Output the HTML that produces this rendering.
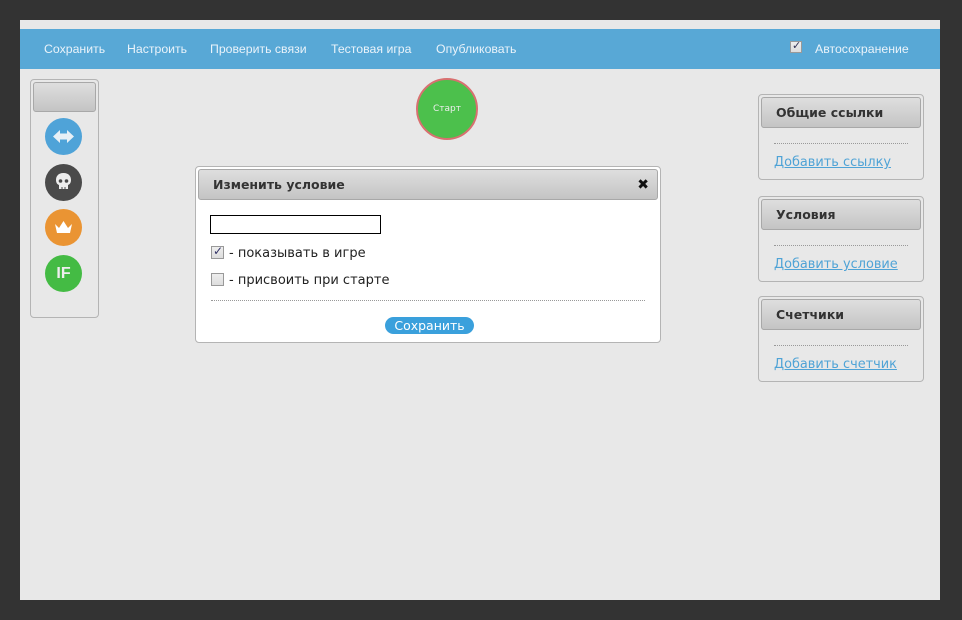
<!DOCTYPE html>
<html><head><meta charset="utf-8"><style>
*{box-sizing:border-box;margin:0;padding:0}
body{width:962px;height:620px;background:#333;font-family:"DejaVu Sans",sans-serif;position:relative;overflow:hidden}
.main{position:absolute;left:20px;top:20px;width:920px;height:580px;background:#e8e8e8}
.bar{position:absolute;left:20px;top:29px;width:920px;height:40px;background:#58a8d6}
.nav{position:absolute;top:42px;font-size:12.3px;color:#eaf3fa;white-space:nowrap;font-family:"Liberation Sans",sans-serif}
.panel{position:absolute;border:1px solid #b4b4b4;border-radius:4px;background:#e8e8e8}
.hdr{position:absolute;border:1px solid #a8a8a8;border-radius:3px;background:linear-gradient(#dedede,#c4c4c4);font-weight:bold;font-size:12.5px;color:#333;padding-left:14px;line-height:30px}
.dot{position:absolute;border-top:1px dotted #999;height:0}
a{position:absolute;color:#4fa3d6;text-decoration:underline;font-size:12.9px}
.circ{position:absolute;width:37px;height:37px;border-radius:50%;left:45px}
.cb{position:absolute;width:13px;height:13px;border:1px solid #999;background:linear-gradient(#eee,#ddd)}
.txt{position:absolute;font-size:13px;color:#222;white-space:nowrap}
</style></head><body>
<div class="main"></div>
<div class="bar"></div>
<div class="nav" style="left:44px">Сохранить</div>
<div class="nav" style="left:127px">Настроить</div>
<div class="nav" style="left:210px">Проверить связи</div>
<div class="nav" style="left:331px">Тестовая игра</div>
<div class="nav" style="left:436px">Опубликовать</div>
<div class="cb" style="left:790px;top:41px;width:12px;height:12px"><span style="position:absolute;left:1px;top:-3px;font-size:11px;color:#335">✓</span></div>
<div class="nav" style="left:815px">Автосохранение</div>

<div class="panel" style="left:30px;top:79px;width:69px;height:239px"></div>
<div class="hdr" style="left:33px;top:82px;width:63px;height:30px"></div>
<div class="circ" style="top:118px;background:#4fa3d8"><svg width="37" height="37"><path d="M8 18.5 L15 12 V15.5 H22 V12 L29 18.5 L22 25 V21.5 H15 V25 Z" fill="#e8f0f6"/></svg></div>
<div class="circ" style="top:164px;background:#4a4a4a"><svg width="37" height="37"><path d="M18.5 9 C13 9 11 12.5 11 16 C11 19 12.5 20.5 14 21 V25 H23 V21 C24.5 20.5 26 19 26 16 C26 12.5 24 9 18.5 9Z" fill="#eee"/><circle cx="15.5" cy="17" r="1.8" fill="#4a4a4a"/><circle cx="21.5" cy="17" r="1.8" fill="#4a4a4a"/><rect x="16.5" y="23" width="1" height="2" fill="#4a4a4a"/><rect x="19.5" y="23" width="1" height="2" fill="#4a4a4a"/></svg></div>
<div class="circ" style="top:209px;background:#ea9433"><svg width="37" height="37"><path d="M10 15 L14 19 L18.5 12 L23 19 L27 15 L25 24 H12 Z" fill="#fff"/></svg></div>
<div class="circ" style="top:255px;background:#44bb44"><div style="color:#eee;font-weight:bold;font-size:16px;text-align:center;line-height:37px;font-family:'Liberation Sans',sans-serif">IF</div></div>

<div style="position:absolute;left:416px;top:78px;width:62px;height:62px;border-radius:50%;background:#4cc04c;border:2px solid #d87070;color:#eee;font-size:9px;text-align:center;line-height:58px">Старт</div>

<div class="panel" style="left:195px;top:166px;width:466px;height:177px;background:#fff"></div>
<div class="hdr" style="left:198px;top:169px;width:460px;height:31px;line-height:30px">Изменить условие<span style="position:absolute;right:8px;font-size:14px;color:#111">✖</span></div>
<div style="position:absolute;left:210px;top:215px;width:171px;height:19px;border:1px solid #000;background:#fff"></div>
<div class="cb" style="left:211px;top:246px"><span style="position:absolute;left:1px;top:-3px;font-size:12px;color:#336">✓</span></div>
<div class="txt" style="left:229px;top:246px">- показывать в игре</div>
<div class="cb" style="left:211px;top:273px"></div>
<div class="txt" style="left:229px;top:273px">- присвоить при старте</div>
<div class="dot" style="left:211px;top:300px;width:434px"></div>
<div style="position:absolute;left:385px;top:317px;width:89px;height:17px;border-radius:9px;background:#3aa0dc;color:#fff;font-size:12.5px;text-align:center;line-height:17px">Сохранить</div>

<div class="panel" style="left:758px;top:94px;width:166px;height:86px"></div>
<div class="hdr" style="left:761px;top:97px;width:160px;height:31px">Общие ссылки</div>
<div class="dot" style="left:774px;top:143px;width:134px"></div>
<a style="left:774px;top:155px">Добавить ссылку</a>
<div class="panel" style="left:758px;top:196px;width:166px;height:86px"></div>
<div class="hdr" style="left:761px;top:199px;width:160px;height:31px">Условия</div>
<div class="dot" style="left:774px;top:245px;width:134px"></div>
<a style="left:774px;top:257px">Добавить условие</a>
<div class="panel" style="left:758px;top:296px;width:166px;height:86px"></div>
<div class="hdr" style="left:761px;top:299px;width:160px;height:31px">Счетчики</div>
<div class="dot" style="left:774px;top:345px;width:134px"></div>
<a style="left:774px;top:357px">Добавить счетчик</a>
</body></html>
